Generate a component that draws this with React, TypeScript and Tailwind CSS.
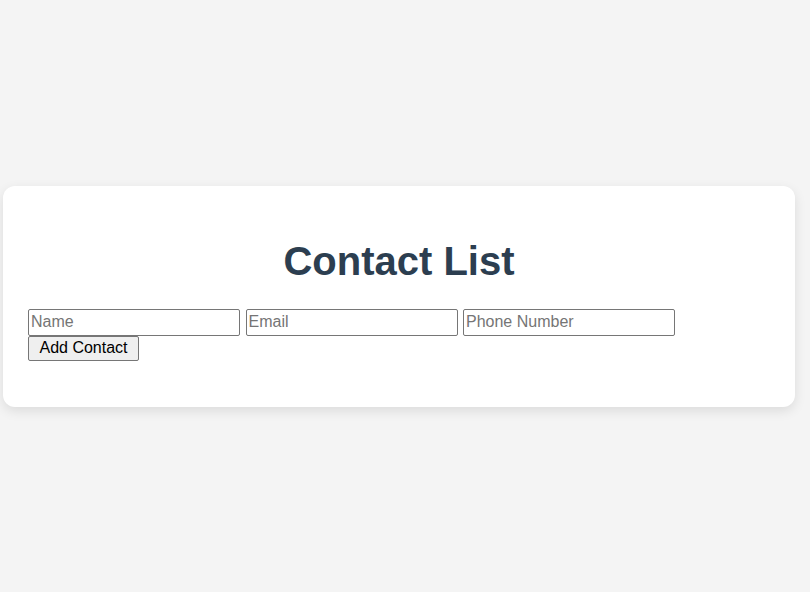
import React, { useState } from 'react';

type Contact = { name: string; email: string; phone: string };

const App: React.FC = () => {
  const [contacts, setContacts] = useState<Contact[]>([]);
  const [form, setForm] = useState<Contact>({ name: '', email: '', phone: '' });

  const addContact = (e: React.FormEvent) => {
    e.preventDefault();
    if (!form.name) return;
    setContacts([...contacts, form]);
    setForm({ name: '', email: '', phone: '' });
  };

  const inputClass =
    "w-[212px] h-[27px] px-[2px] bg-white border border-[#767676] rounded-[2px] text-[16px] text-black placeholder:text-[#757575] outline-none";

  return (
    <div className="min-h-screen bg-[#f4f4f4] flex items-center font-['Liberation_Sans',Arial,sans-serif]">
      <div className="ml-[3px] w-[792px] bg-white rounded-xl shadow-[0_4px_12px_rgba(0,0,0,0.1)] pt-[52px] pb-[46px] px-[25px]">
        <h1 className="text-center text-[40px] leading-[46px] font-bold text-[#2c3e50]">Contact List</h1>

        <form onSubmit={addContact} className="mt-[25px] flex flex-wrap gap-x-[5.5px]">
          <input
            className={inputClass}
            placeholder="Name"
            value={form.name}
            onChange={e => setForm({ ...form, name: e.target.value })}
          />
          <input
            className={inputClass}
            placeholder="Email"
            value={form.email}
            onChange={e => setForm({ ...form, email: e.target.value })}
          />
          <input
            className={inputClass}
            placeholder="Phone Number"
            value={form.phone}
            onChange={e => setForm({ ...form, phone: e.target.value })}
          />
          <button
            type="submit"
            className="w-[111px] h-[25px] bg-[#efefef] border border-[#767676] rounded-[2px] text-[16px] leading-none text-black"
          >
            Add Contact
          </button>
        </form>

        {contacts.length > 0 && (
          <ul className="mt-4">
            {contacts.map((c, i) => (
              <li key={i} className="text-[#2c3e50]">
                {c.name} {c.email} {c.phone}
              </li>
            ))}
          </ul>
        )}
      </div>
    </div>
  );
};

export default App;
